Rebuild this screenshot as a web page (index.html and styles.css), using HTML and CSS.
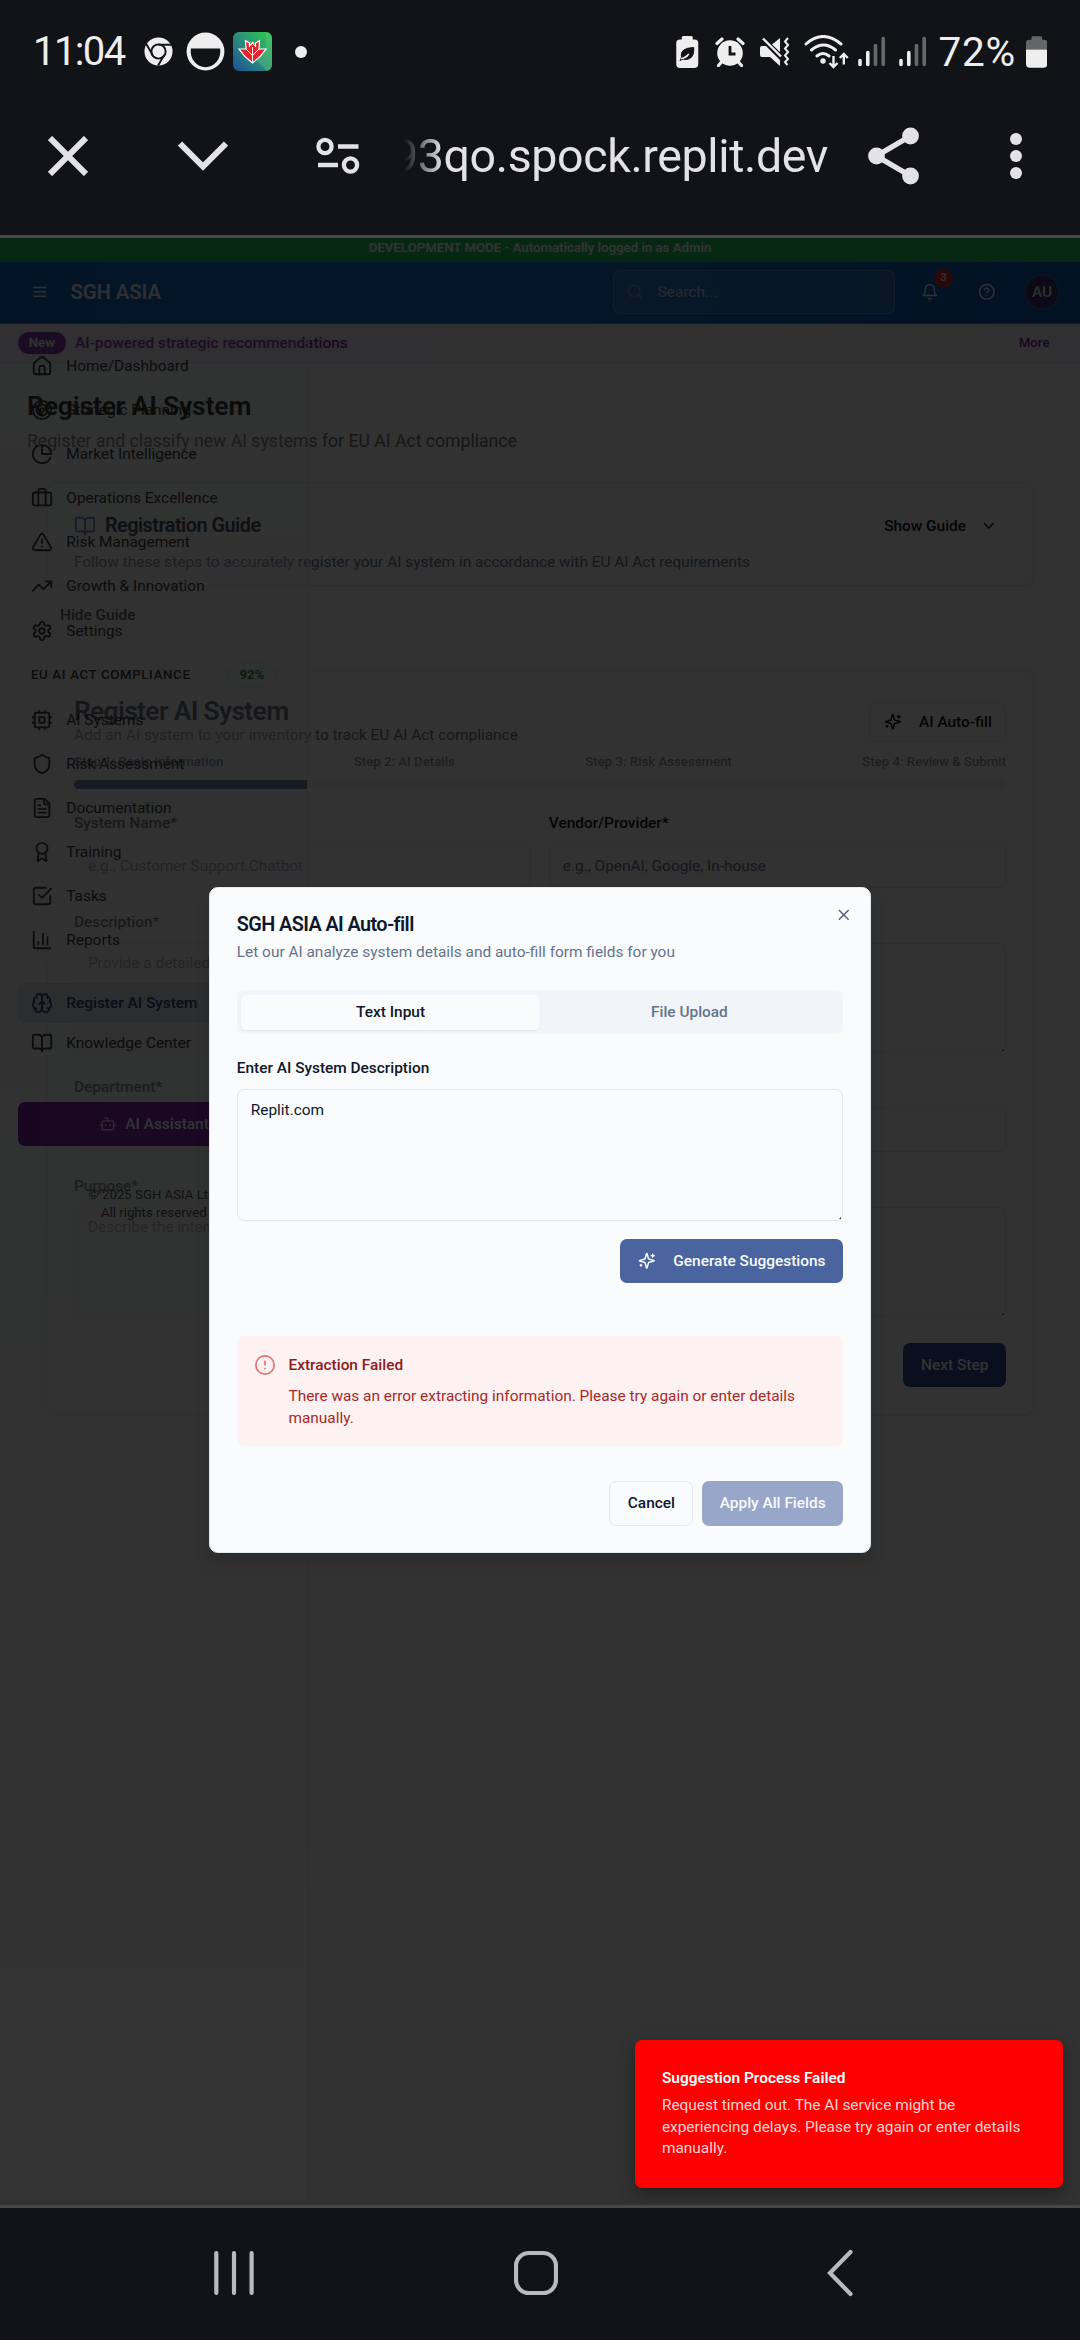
FILE: index.html
```html
<!DOCTYPE html>
<html lang="en">
<head>
<meta charset="utf-8">
<title>Register AI System</title>
<link rel="stylesheet" href="styles.css">
</head>
<body>
<svg class="sprite" aria-hidden="true">
  <symbol id="menu" viewBox="0 0 24 24"><path d="M4 6h16M4 12h16M4 18h16"/></symbol>
  <symbol id="search" viewBox="0 0 24 24"><circle cx="11" cy="11" r="8"/><path d="m21 21-4.3-4.3"/></symbol>
  <symbol id="bell" viewBox="0 0 24 24"><path d="M6 8a6 6 0 0 1 12 0c0 7 3 9 3 9H3s3-2 3-9"/><path d="M10.3 21a1.94 1.94 0 0 0 3.4 0"/></symbol>
  <symbol id="help" viewBox="0 0 24 24"><circle cx="12" cy="12" r="10"/><path d="M9.09 9a3 3 0 0 1 5.83 1c0 2-3 3-3 3M12 17h.01"/></symbol>
  <symbol id="home" viewBox="0 0 24 24"><path d="M15 21v-8a1 1 0 0 0-1-1h-4a1 1 0 0 0-1 1v8"/><path d="M3 10a2 2 0 0 1 .709-1.528l7-5.999a2 2 0 0 1 2.582 0l7 5.999A2 2 0 0 1 21 10v9a2 2 0 0 1-2 2H5a2 2 0 0 1-2-2z"/></symbol>
  <symbol id="target" viewBox="0 0 24 24"><circle cx="12" cy="12" r="10"/><circle cx="12" cy="12" r="6"/><circle cx="12" cy="12" r="2"/></symbol>
  <symbol id="pie" viewBox="0 0 24 24"><path d="M21.21 15.89A10 10 0 1 1 8 2.83"/><path d="M22 12A10 10 0 0 0 12 2v10z"/></symbol>
  <symbol id="briefcase" viewBox="0 0 24 24"><path d="M16 20V4a2 2 0 0 0-2-2h-4a2 2 0 0 0-2 2v16"/><rect width="20" height="14" x="2" y="6" rx="2"/></symbol>
  <symbol id="warning" viewBox="0 0 24 24"><path d="m21.73 18-8-14a2 2 0 0 0-3.48 0l-8 14A2 2 0 0 0 4 21h16a2 2 0 0 0 1.73-3M12 9v4M12 17h.01"/></symbol>
  <symbol id="trend" viewBox="0 0 24 24"><path d="m22 7-8.5 8.5-5-5L2 17"/><path d="M16 7h6v6"/></symbol>
  <symbol id="settings" viewBox="0 0 24 24"><path d="M12.22 2h-.44a2 2 0 0 0-2 2v.18a2 2 0 0 1-1 1.73l-.43.25a2 2 0 0 1-2 0l-.15-.08a2 2 0 0 0-2.73.73l-.22.38a2 2 0 0 0 .73 2.73l.15.1a2 2 0 0 1 1 1.72v.51a2 2 0 0 1-1 1.74l-.15.09a2 2 0 0 0-.73 2.73l.22.38a2 2 0 0 0 2.73.73l.15-.08a2 2 0 0 1 2 0l.43.25a2 2 0 0 1 1 1.73V20a2 2 0 0 0 2 2h.44a2 2 0 0 0 2-2v-.18a2 2 0 0 1 1-1.73l.43-.25a2 2 0 0 1 2 0l.15.08a2 2 0 0 0 2.73-.73l.22-.39a2 2 0 0 0-.73-2.73l-.15-.08a2 2 0 0 1-1-1.74v-.5a2 2 0 0 1 1-1.74l.15-.09a2 2 0 0 0 .73-2.73l-.22-.38a2 2 0 0 0-2.73-.73l-.15.08a2 2 0 0 1-2 0l-.43-.25a2 2 0 0 1-1-1.73V4a2 2 0 0 0-2-2z"/><circle cx="12" cy="12" r="3"/></symbol>
  <symbol id="cpu" viewBox="0 0 24 24"><rect width="16" height="16" x="4" y="4" rx="2"/><rect width="6" height="6" x="9" y="9" rx="1"/><path d="M15 2v2M15 20v2M2 15h2M2 9h2M20 15h2M20 9h2M9 2v2M9 20v2"/></symbol>
  <symbol id="shield" viewBox="0 0 24 24"><path d="M20 13c0 5-3.5 7.5-7.66 8.95a1 1 0 0 1-.67-.01C7.5 20.5 4 18 4 13V6a1 1 0 0 1 1-1c2 0 4.5-1.2 6.24-2.72a1.17 1.17 0 0 1 1.52 0C14.51 3.81 17 5 19 5a1 1 0 0 1 1 1z"/></symbol>
  <symbol id="file" viewBox="0 0 24 24"><path d="M15 2H6a2 2 0 0 0-2 2v16a2 2 0 0 0 2 2h12a2 2 0 0 0 2-2V7Z"/><path d="M14 2v4a2 2 0 0 0 2 2h4M10 9H8M16 13H8M16 17H8"/></symbol>
  <symbol id="award" viewBox="0 0 24 24"><path d="m15.477 12.89 1.515 8.526a.5.5 0 0 1-.81.47l-3.58-2.687a1 1 0 0 0-1.197 0l-3.586 2.686a.5.5 0 0 1-.81-.469l1.514-8.526"/><circle cx="12" cy="8" r="6"/></symbol>
  <symbol id="tasks" viewBox="0 0 24 24"><path d="m9 11 3 3L22 4"/><path d="M21 12v7a2 2 0 0 1-2 2H5a2 2 0 0 1-2-2V5a2 2 0 0 1 2-2h11"/></symbol>
  <symbol id="chart" viewBox="0 0 24 24"><path d="M3 3v16a2 2 0 0 0 2 2h16M18 17V9M13 17V5M8 17v-3"/></symbol>
  <symbol id="brain" viewBox="0 0 24 24"><path d="M12 5a3 3 0 1 0-5.997.125 4 4 0 0 0-2.526 5.77 4 4 0 0 0 .556 6.588A4 4 0 1 0 12 18Z"/><path d="M12 5a3 3 0 1 1 5.997.125 4 4 0 0 1 2.526 5.77 4 4 0 0 1-.556 6.588A4 4 0 1 1 12 18Z"/><path d="M15 13a4.5 4.5 0 0 1-3-4 4.5 4.5 0 0 1-3 4"/><path d="M17.599 6.500a3 3 0 0 0 .399-1.375M6.003 5.125A3 3 0 0 0 6.401 6.500M3.477 10.896a4 4 0 0 1 .585-.396M19.938 10.500a4 4 0 0 1 .585.396M6 18a4 4 0 0 1-1.967-.516M19.967 17.484A4 4 0 0 1 18 18"/></symbol>
  <symbol id="book" viewBox="0 0 24 24"><path d="M12 7v14M3 18a1 1 0 0 1-1-1V4a1 1 0 0 1 1-1h5a4 4 0 0 1 4 4 4 4 0 0 1 4-4h5a1 1 0 0 1 1 1v13a1 1 0 0 1-1 1h-6a3 3 0 0 0-3 3 3 3 0 0 0-3-3z"/></symbol>
  <symbol id="bot" viewBox="0 0 24 24"><path d="M12 8V4H8"/><rect width="16" height="12" x="4" y="8" rx="2"/><path d="M2 14h2M20 14h2M15 13v2M9 13v2"/></symbol>
  <symbol id="sparkles" viewBox="0 0 24 24"><path d="M9.937 15.5A2 2 0 0 0 8.5 14.063l-6.135-1.582a.5.5 0 0 1 0-.962L8.5 9.936A2 2 0 0 0 9.937 8.5l1.582-6.135a.5.5 0 0 1 .963 0L14.063 8.5A2 2 0 0 0 15.5 9.937l6.135 1.581a.5.5 0 0 1 0 .964L15.5 14.063a2 2 0 0 0-1.437 1.437l-1.582 6.135a.5.5 0 0 1-.963 0z"/><path d="M20 3v4M22 5h-4M4 17v2M5 18H3"/></symbol>
  <symbol id="chevron" viewBox="0 0 24 24"><path d="m6 9 6 6 6-6"/></symbol>
  <symbol id="close" viewBox="0 0 24 24"><path d="M18 6 6 18M6 6l12 12"/></symbol>
  <symbol id="alert" viewBox="0 0 24 24"><circle cx="12" cy="12" r="10"/><path d="M12 8v4M12 16h.01"/></symbol>
  <symbol id="signal" viewBox="0 0 28 32"><path d="M2 24.5v4M9.8 16.5v12" stroke="#eee"/><path d="M17.5 9.5v19M25.2 2.5v26" stroke="#666769"/></symbol>
</svg>

<div class="phone">
  <div class="status">
    <span class="clock">11:04</span>
    <svg class="st-chrome" viewBox="0 0 30 30"><circle cx="15" cy="15" r="14.5" fill="#eee"/><g stroke="#121317" stroke-width="2" fill="none"><path d="M15 8h13.5M8.9 18.5 2.2 7M21 18.5 14.6 29.5"/><circle cx="15" cy="15" r="7.4"/></g></svg>
    <svg class="st-half" viewBox="0 0 40 40"><circle cx="20" cy="20" r="19.4" fill="#eee"/><path d="M5 17h30a15.2 16.5 0 1 1-30 0z" fill="#121317"/></svg>
    <svg class="st-app" viewBox="0 0 39 39"><defs><linearGradient id="ag" x1="0" y1="1" x2="1" y2="0"><stop offset="0" stop-color="#1f4b9a"/><stop offset=".5" stop-color="#2b8f7c"/><stop offset="1" stop-color="#30cf4c"/></linearGradient></defs><rect width="39" height="39" rx="6" fill="url(#ag)"/><path d="M33 0v16L22 27l12 12h-1a6 6 0 0 0 6-6V6a6 6 0 0 0-6-6z" fill="#5bbd78" opacity=".45"/><path d="M19.500 31 12 24.500l-6-7.500h7L12.500 8.500l4 2.500v3l3-3.500 3 3.500v-3l4-2.500L26 17h7l-6 7.500z" fill="#e2262d" stroke="#fff" stroke-width="1.200"/><path d="M19.500 15V31M13 17l6.500 6.500L26 17" stroke="#fff" fill="none" stroke-width=".9"/></svg>
    <svg class="st-dot" viewBox="0 0 12 12"><circle cx="6" cy="6" r="6" fill="#eee"/></svg>
    <span class="spacer"></span>
    <svg class="st-leaf" viewBox="0 0 22 32"><path d="M7 0h8q1.500 0 1.500 1.500V3.500h2Q22 3.500 22 7v21q0 4-4 4H4q-4 0-4-4V7q0-3.500 3.500-3.500h2V1.500Q5.500 0 7 0z" fill="#eee"/><path d="M5 20q-1-8 12.500-8.500 1 11.500-8 12-2 0-2.500-.5l-3.500 1.500M5 22.500q5 0 8-5" fill="#121317" stroke="#121317" stroke-width="1"/><path d="M4.500 22.500q5 0 8-4.500" fill="none" stroke="#eee" stroke-width="1.400"/></svg>
    <svg class="st-alarm" viewBox="0 0 30 30"><circle cx="15" cy="16" r="12.800" fill="#eee"/><path d="M6.500 25 3.500 28.500M23.500 25l3 3.500M2 6.500 7 2M28 6.500 23 2" stroke="#eee" stroke-width="3.200" stroke-linecap="round"/><path d="M15 9v8h5.500" fill="none" stroke="#121317" stroke-width="2.800"/></svg>
    <svg class="st-mute" viewBox="0 0 30 30"><path d="M0 11q0-2 2-2h4l14 14v6L10 20H2q-2 0-2-2zM12 7.500 20 1v14z" fill="#eee"/><path d="M3 1.500l18 18" stroke="#eee" stroke-width="2.400"/><path d="m28 1-3 3.500 3 3.500-3 3.500 3 3.500-3 3.500 3 3.500-3 3 2.500 3" fill="none" stroke="#eee" stroke-width="2"/></svg>
    <svg class="st-wifi" viewBox="0 0 45 34"><g fill="none" stroke="#eee" stroke-width="3" stroke-linecap="round"><path d="M2 9q17-15 35 0M7.500 15q12-10 24 0M13 21q6-5 12 0"/></g><circle cx="19" cy="26" r="2.700" fill="#eee"/><path d="M29.500 21v11m-4-4 4 4 4-4M39.800 29.500V19m-4 4 4-4 4 4" fill="none" stroke="#eee" stroke-width="2.400"/></svg>
    <svg class="st-sig"><use href="#signal"/></svg>
    <svg class="st-sig"><use href="#signal"/></svg>
    <span class="percent">72%</span>
    <svg class="st-batt" viewBox="0 0 22 32"><path d="M7 0h8q1.500 0 1.500 1.500V3.500h2Q22 3.500 22 7v6.500H0V7q0-3.500 3.500-3.500h2V1.500Q5.500 0 7 0z" fill="#646567"/><path d="M0 13.500h22V28q0 4-4 4H4q-4 0-4-4z" fill="#eee"/></svg>
  </div>

  <div class="toolbar">
    <svg class="tb-close" viewBox="0 0 40 40"><path d="m2 2 36 36M38 2 2 38"/></svg>
    <svg class="tb-down" viewBox="0 0 50 30"><path d="m2 2.500 23 23 23-23"/></svg>
    <svg class="tb-tune" viewBox="0 0 44 38"><circle cx="9" cy="9.500" r="6.600"/><path d="M22 9.500h20.500M2 28h20"/><circle cx="34.500" cy="28" r="6.600"/></svg>
    <div class="url"><span>93qo.spock.replit.dev</span></div>
    <svg class="tb-share" viewBox="0 0 52 58"><path d="M42.500 9 8.500 29l34 20"/><g><circle cx="42.500" cy="9" r="8.400"/><circle cx="8.500" cy="29" r="8.400"/><circle cx="42.500" cy="49" r="8.400"/></g></svg>
    <svg class="tb-dots" viewBox="0 0 12 48"><circle cx="6" cy="7" r="6"/><circle cx="6" cy="24" r="6"/><circle cx="6" cy="41" r="6"/></svg>
  </div>

  <div class="webview">
    <div class="devmode">DEVELOPMENT MODE - Automatically logged in as Admin</div>
    <header class="header">
      <svg class="i16"><use href="#menu"/></svg>
      <span class="brand">SGH ASIA</span>
      <div class="search"><svg class="i16"><use href="#search"/></svg><span>Search...</span></div>
      <div class="bell"><svg class="i16"><use href="#bell"/></svg><b>3</b></div>
      <svg class="i16 help"><use href="#help"/></svg>
      <div class="avatar">AU</div>
    </header>
    <div class="announce"><span class="pill">New</span><span class="atext">AI-powered strategic recommendations</span><span class="more">More</span></div>

    <main class="main">
      <h1>Register AI System</h1>
      <p class="lead">Register and classify new AI systems for EU AI Act compliance</p>
      <section class="card guide">
        <div class="row">
          <svg class="i20"><use href="#book"/></svg>
          <h3>Registration Guide</h3>
          <span class="show">Show Guide<svg class="i16"><use href="#chevron"/></svg></span>
        </div>
        <p>Follow these steps to accurately register your AI system in accordance with EU AI Act requirements</p>
      </section>
      <div class="hide">Hide Guide</div>
      <section class="card form">
        <div class="row">
          <div><h2>Register AI System</h2><p>Add an AI system to your inventory to track EU AI Act compliance</p></div>
          <span class="autofill"><svg class="i16"><use href="#sparkles"/></svg>AI Auto-fill</span>
        </div>
        <div class="steps"><span class="on">Step 1: Basic Information</span><span>Step 2: AI Details</span><span>Step 3: Risk Assessment</span><span>Step 4: Review &amp; Submit</span></div>
        <div class="progress"><div style="width:25%"></div></div>
        <div class="two">
          <div><label>System Name*</label><div class="input">e.g., Customer Support Chatbot</div></div>
          <div><label>Vendor/Provider*</label><div class="input">e.g., OpenAI, Google, In-house</div></div>
        </div>
        <label>Description*</label>
        <div class="input area">Provide a detailed</div>
        <label>Department*</label>
        <div class="input"></div>
        <label>Purpose*</label>
        <div class="input area">Describe the inten</div>
        <div class="actions"><span class="next">Next Step</span></div>
      </section>
    </main>

    <nav class="sidebar">
      <a><svg class="i20"><use href="#home"/></svg>Home/Dashboard</a>
      <a><svg class="i20"><use href="#target"/></svg>Strategic Planning</a>
      <a><svg class="i20"><use href="#pie"/></svg>Market Intelligence</a>
      <a><svg class="i20"><use href="#briefcase"/></svg>Operations Excellence</a>
      <a><svg class="i20"><use href="#warning"/></svg>Risk Management</a>
      <a><svg class="i20"><use href="#trend"/></svg>Growth &amp; Innovation</a>
      <a><svg class="i20"><use href="#settings"/></svg>Settings</a>
      <div class="group"><span>EU AI ACT COMPLIANCE</span><b>92%</b></div>
      <a><svg class="i20"><use href="#cpu"/></svg>AI Systems</a>
      <a><svg class="i20"><use href="#shield"/></svg>Risk Assessment</a>
      <a><svg class="i20"><use href="#file"/></svg>Documentation</a>
      <a><svg class="i20"><use href="#award"/></svg>Training</a>
      <a><svg class="i20"><use href="#tasks"/></svg>Tasks</a>
      <a><svg class="i20"><use href="#chart"/></svg>Reports</a>
      <a class="current"><svg class="i20"><use href="#brain"/></svg>Register AI System</a>
      <a class="tight"><svg class="i20"><use href="#book"/></svg>Knowledge Center</a>
      <div class="assistant"><svg class="i16"><use href="#bot"/></svg>AI Assistant</div>
      <div class="copy">© 2025 SGH ASIA Ltd.<br>All rights reserved</div>
    </nav>

    <div class="backdrop"></div>

    <div class="dialog">
      <svg class="i16 x"><use href="#close"/></svg>
      <h2>SGH ASIA AI Auto-fill</h2>
      <p class="desc">Let our AI analyze system details and auto-fill form fields for you</p>
      <div class="tabs"><span class="active">Text Input</span><span>File Upload</span></div>
      <label>Enter AI System Description</label>
      <div class="textarea">Replit.com</div>
      <div class="actions"><span class="btn primary gen"><svg class="i16"><use href="#sparkles"/></svg>Generate Suggestions</span></div>
      <div class="error">
        <svg class="i20"><use href="#alert"/></svg>
        <div><h3>Extraction Failed</h3><p>There was an error extracting information. Please try again or enter details manually.</p></div>
      </div>
      <div class="actions foot"><span class="btn cancel">Cancel</span><span class="btn primary off">Apply All Fields</span></div>
    </div>

    <div class="toast"><b>Suggestion Process Failed</b><p>Request timed out. The AI service might be experiencing delays. Please try again or enter details manually.</p></div>
  </div>

  <div class="navbar">
    <svg class="nv-recent" viewBox="0 0 40 46"><path d="M2.300 3v40M20 3v40M37.600 3v40"/></svg>
    <svg class="nv-home" viewBox="0 0 44 46"><rect x="2" y="3" width="40" height="40" rx="13"/></svg>
    <svg class="nv-back" viewBox="0 0 28 48"><path d="M24.500 3 4 24l20.500 21"/></svg>
  </div>
</div>
</body>
</html>
```
FILE: styles.css
```css
* { box-sizing: border-box; }
html { font-size: 17.632px; }
body { margin: 0; background: #121317; font-family: Roboto, "Liberation Sans", sans-serif; font-size: .875rem; line-height: 22px; color: #0f172a; }
h1, h2, h3, p { margin: 0; }
svg { display: block; flex: none; }
.sprite { position: absolute; width: 0; height: 0; }
.i16, .i20 { width: 17.6px; height: 17.6px; fill: none; stroke: currentColor; stroke-width: 2; stroke-linecap: round; stroke-linejoin: round; }
.i20 { width: 22px; height: 22px; }
.phone { width: 1080px; height: 2340px; display: flex; flex-direction: column; overflow: hidden; }

/* system status bar */
.status { height: 102px; display: flex; align-items: center; padding: 1px 33px 0 33px; color: #eee; }
.clock { font-size: 40px; letter-spacing: -1.6px; width: 110.500px; white-space: nowrap; }
.st-chrome { width: 29px; height: 29px; margin-right: 13.500px; }
.st-half { width: 39px; height: 39px; margin-right: 8px; }
.st-app { width: 39px; height: 39px; margin-right: 22.500px; }
.st-dot { width: 12px; height: 12px; }
.spacer { flex: 1; }
.st-leaf { width: 22.500px; height: 32px; margin-right: 16px; }
.st-alarm { width: 30px; height: 30px; margin-right: 15px; }
.st-mute { width: 30px; height: 30px; margin-right: 14px; }
.st-wifi { width: 45px; height: 34px; margin-right: 9px; }
.st-sig { width: 28px; height: 32px; margin-right: 13px; fill: none; stroke-width: 3.600; stroke-linecap: round; }
.percent { font-size: 40.500px; letter-spacing: .8px; width: 87px; margin-left: -1px; white-space: nowrap; }
.st-batt { width: 21.500px; height: 32px; }

/* browser toolbar */
.toolbar { height: 136px; display: flex; align-items: center; padding: 0 58px 26px 48px; border-bottom: 3px solid #46474f; fill: none; stroke: #e3e2e8; }
.tb-close { width: 40px; height: 40px; stroke-width: 6; margin-right: 90px; }
.tb-down { width: 50px; height: 30px; stroke-width: 6; margin-right: 88px; }
.tb-tune { width: 44px; height: 38px; stroke-width: 4.300; margin-right: 44px; }
.url { width: 424px; height: 60px; line-height: 61px; display: flex; justify-content: flex-end; overflow: hidden; font-size: 46.500px; letter-spacing: -.36px; color: #e3e2e8; -webkit-mask-image: linear-gradient(90deg, transparent 0, #000 38px); mask-image: linear-gradient(90deg, transparent 0, #000 38px); }
.tb-share { width: 52px; height: 58px; stroke-width: 5.500; margin-left: 40px; }
.tb-share g, .tb-dots { fill: #e3e2e8; stroke: none; }
.tb-dots { width: 12px; height: 48px; margin-left: auto; }

/* page */
.webview { height: 1970px; position: relative; overflow: hidden; background: #fafafa; border-bottom: 3px solid #46474b; }
.devmode { height: 24px; background: #22c55e; color: #fff; font-size: .75rem; font-weight: 600; line-height: 20px; text-align: center; }
.header { height: 61.500px; display: flex; align-items: center; padding: 0 20px 0 31px; background: linear-gradient(90deg, #1565c0, #1870c8 45%, #0d5ab0); border-bottom: 1px solid #3b82c8; color: rgba(255, 255, 255, .9); position: relative; z-index: 3; }
.brand { font-size: 20.300px; letter-spacing: -.1px; font-weight: 600; margin-left: 22px; }
.search { margin-left: auto; width: 282px; height: 44.200px; display: flex; align-items: center; gap: 14.500px; padding-left: 12px; border: 1px solid rgba(255, 255, 255, .2); border-radius: 7px; background: rgba(255, 255, 255, .1); color: rgba(255, 255, 255, .7); }
.search svg { color: rgba(160, 160, 170, .9); }
.bell { position: relative; margin-left: 26.500px; }
.bell b { position: absolute; left: 13.500px; top: -14px; width: 17.600px; height: 17.600px; line-height: 17.600px; border-radius: 50%; background: #dc2626; font-size: 11px; text-align: center; }
.help { margin-left: 39.700px; }
.avatar { margin-left: 28px; width: 36px; height: 36px; line-height: 32px; text-align: center; font-weight: 500; border-radius: 50%; background: #38336f; border: 2px solid #345e9c; }
.announce { height: 40.200px; display: flex; align-items: center; padding: 0 30.500px 0 17.600px; background: linear-gradient(90deg, #efe8f4, #f0eef6 50%, #eef0f7); border-bottom: 1px solid #e2e0ea; color: #7b1fa2; font-weight: 500; }
.pill { width: 48.400px; height: 22.500px; line-height: 22.500px; border-radius: 12px; background: #7b1fa2; color: #fff; font-size: .75rem; font-weight: 600; text-align: center; margin-right: 9px; }
.more { margin-left: auto; font-size: .75rem; }

.main { padding: 25px 46.500px 0; }
h1 { margin-left: -19.500px; font-size: 1.500rem; font-weight: 600; letter-spacing: -.12px; line-height: 33.500px; padding-bottom: 1.500px; color: #111; }
.lead { margin: 4.700px 0 27.400px -19.500px; font-size: 1rem; line-height: 26.400px; color: #6e6e6e; }
.card { border: 1px solid #e1e4e8; border-radius: 9px; background: #fbfbfc; padding: 26.400px; box-shadow: 0 1px 2px rgba(0, 0, 0, .06); }
.card p { color: #64748b; }
.row { display: flex; align-items: center; }
.guide { padding-bottom: 12.800px; margin-bottom: 17.200px; }
.guide .row { height: 32.600px; margin-bottom: 8.400px; color: #4a64a0; }
.guide h3 { margin-left: 9px; font-size: 1.125rem; font-weight: 600; letter-spacing: -.025em; color: #0f172a; }
.show { margin-left: auto; margin-right: 9px; display: flex; align-items: center; gap: 13.500px; font-weight: 500; color: #0f172a; }
.hide { margin-left: 13.500px; font-weight: 500; margin-bottom: 44.600px; }
.form h2 { font-size: 1.500rem; font-weight: 600; letter-spacing: -.025em; line-height: 26.400px; }
.autofill { margin-left: auto; height: 39.700px; width: 136.700px; display: flex; align-items: center; gap: 17.500px; padding-left: 13.500px; font-weight: 500; border: 1px solid #e1e4e8; border-radius: 7px; color: #0f172a; }
.steps { display: flex; justify-content: space-between; margin-top: 7.300px; font-size: .75rem; font-weight: 500; line-height: 17.600px; color: #94979c; }
.steps .on { color: #3c5490; }
.progress { height: 8.800px; margin: 9.100px 0 26.500px; border-radius: 5px; background: #f1f1f3; overflow: hidden; }
.progress div { height: 100%; background: #0d2a78; }
.two { display: grid; grid-template-columns: 1fr 1fr; gap: 17.600px; }
label { display: block; font-weight: 500; line-height: 15.400px; padding-top: 1px; margin-bottom: 12.300px; }
.input { height: 44px; margin-bottom: 26.200px; padding: 10px 13px; border: 1px solid #e3e5e9; border-radius: 7px; color: #64748b; background: #f8f8fa; }
.two .input { margin-bottom: 26.400px; }
.area { height: 110.200px; padding-top: 7.700px; position: relative; }
.area::after, .textarea::after { content: ""; position: absolute; right: 1px; bottom: 1px; border: 1px solid #333; border-top-color: transparent; border-left-color: transparent; }
.actions { display: flex; justify-content: flex-end; gap: 8.800px; }
.next { width: 102.800px; height: 44px; line-height: 44px; text-align: center; font-weight: 500; border-radius: 7px; background: #2f4b96; color: #f8fafc; }

/* translucent drawer over the page */
.sidebar { position: absolute; z-index: 2; left: 0; top: 85.500px; bottom: 0; width: 308.500px; padding: 22.700px 17.600px 0; display: flex; flex-direction: column; gap: 4.400px; border-right: 1px solid #e8e8ea; background: linear-gradient(180deg, rgba(225, 232, 242, .12), rgba(228, 235, 243, .25) 10%, rgba(232, 238, 245, .42) 20%, rgba(238, 243, 243, .5) 38%, rgba(248, 250, 248, .6) 65%, #fdfdfd); color: #3c3c3c; }
.sidebar a { height: 39.700px; display: flex; align-items: center; gap: 13.500px; padding-left: 13.200px; border-radius: 7px; }
.group { display: flex; align-items: center; justify-content: space-between; height: 23.700px; margin: 8.400px 14px 8.800px 13.400px; font-size: .75rem; font-weight: 500; letter-spacing: .05em; }
.group b { width: 48px; height: 23.700px; line-height: 21.700px; text-align: center; border: 1px solid #d9eadd; border-radius: 12px; color: #12862f; letter-spacing: 0; font-weight: 600; background: rgba(240, 253, 244, .5); }
.sidebar .current { margin-top: 18.400px; background: rgba(165, 172, 188, .3); color: #2f4590; font-weight: 500; }
.sidebar .tight { margin-top: -4.100px; }
.assistant { height: 44.500px; margin-top: 35px; display: flex; align-items: center; justify-content: center; gap: 9px; border-radius: 7px; background: linear-gradient(90deg, #7b1fa2, #8a2bb5); color: #fff; font-weight: 500; }
.assistant svg { opacity: .8; }
.copy { margin-top: 35.300px; text-align: center; font-size: .75rem; line-height: 17.800px; color: #555; }
.backdrop { position: absolute; inset: 0; z-index: 4; background: rgba(0, 0, 0, .8); }

/* auto-fill dialog */
.dialog { position: absolute; z-index: 5; left: 209.400px; top: 649.300px; width: 661.200px; height: 665.400px; padding: 26.400px; background: #f9fbfd; border: 1px solid #e2e8f0; border-radius: 8.800px; box-shadow: 0 10px 15px rgba(0, 0, 0, .12); }
.dialog .x { position: absolute; right: 17.400px; top: 17.800px; color: #565d6c; }
.dialog h2 { font-size: 1.125rem; font-weight: 600; letter-spacing: -.03em; line-height: 18px; margin-top: .500px; padding-top: 1px; }
.desc { margin: 7px 0 27px; color: #64748b; }
.tabs { height: 44px; margin-bottom: 26.300px; padding: 4.400px; display: flex; border-radius: 7px; background: #f1f5f9; color: #64748b; font-weight: 500; text-align: center; line-height: 35.200px; }
.tabs span { flex: 1; border-radius: 5px; }
.tabs .active { background: #f9fbfd; color: #0f172a; box-shadow: 0 1px 2px rgba(0, 0, 0, .06); }
.dialog label { margin-bottom: 12.200px; }
.textarea { position: relative; height: 132px; padding: 9px 13px; margin-bottom: 17.600px; border: 1px solid #e2e6ec; border-radius: 7px; }
.btn { height: 44.200px; display: flex; align-items: center; justify-content: center; border-radius: 7px; font-weight: 500; }
.primary { background: #4a64a0; color: #f8fafc; }
.gen { width: 223.200px; gap: 18px; }
.error { display: flex; gap: 12px; height: 110.300px; margin: 53px 0 35.200px; padding: 17.700px; border-radius: 7px; background: #fef1f1; color: #a52a2a; }
.error svg { color: #e07070; stroke-width: 1.800; }
.error h3 { font-size: inherit; font-weight: 500; line-height: 22px; color: #8b1c1c; }
.error p { margin-top: 9px; }
.cancel { width: 84px; border: 1px solid #e5e9ef; }
.off { width: 141px; background: #98a6c9; }

.toast { position: absolute; z-index: 6; right: 17.300px; bottom: 17px; width: 428.200px; height: 147.700px; padding: 27.800px 27.400px; border-radius: 7px; background: #f00; color: rgba(255, 248, 248, .86); box-shadow: 0 6px 15px rgba(0, 0, 0, .35); line-height: 21.700px; }
.toast b { display: block; font-weight: 600; color: #fff; margin-bottom: 5px; }

/* android navigation */
.navbar { height: 132px; position: relative; display: flex; align-items: center; padding: 0 226px 2px 214px; justify-content: space-between; fill: none; stroke: #b9babd; stroke-width: 4.200; stroke-linecap: round; }
.nv-recent { width: 40px; height: 46px; }
.nv-home { width: 44px; height: 46px; margin-left: -8px; }
.nv-back { width: 28px; height: 48px; }
```
